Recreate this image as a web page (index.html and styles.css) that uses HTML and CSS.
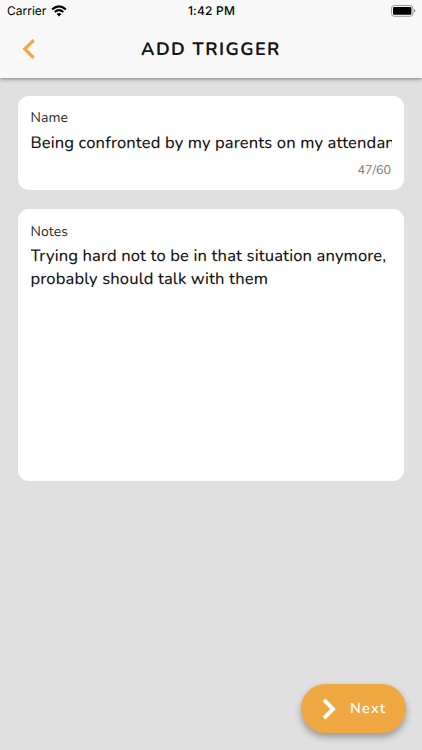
FILE: index.html
```html
<!DOCTYPE html>
<html lang="en">
<head>
    <meta charset="UTF-8">
    <meta name="viewport" content="width=device-width, initial-scale=1.0">
    <title>Add Trigger</title>
    <link rel="stylesheet" href="styles.css">
</head>
<body>
    <header class="top">
        <div class="status">
            <div class="carrier">
                <span>Carrier</span>
                <svg class="wifi" width="16" height="12" viewBox="0 0 16 12">
                    <path d="M1.2 4.4 Q8 -1.8 14.8 4.4" fill="none" stroke="#000" stroke-width="2.2"/>
                    <path d="M3.7 7 Q8 3.2 12.3 7" fill="none" stroke="#000" stroke-width="2"/>
                    <path d="M5.6 9 Q8 6.8 10.4 9 L8 11.5 Z"/>
                </svg>
            </div>
            <span class="time">1:42 PM</span>
            <svg class="battery" width="25" height="12" viewBox="0 0 25 12">
                <rect x="0.5" y="0.5" width="21.4" height="10.8" rx="2.8" fill="none" stroke="#999"/>
                <rect x="2" y="2" width="18.4" height="7.8" rx="1.2"/>
                <path d="M23 4 Q24.4 4.6 24.4 5.8 Q24.4 7 23 7.6 Z" fill="#888"/>
            </svg>
        </div>
        <div class="navbar">
            <button class="back" aria-label="Back">
                <svg width="14" height="22" viewBox="0 0 14 22">
                    <path d="M11.7 2.2 L2.7 11 L11.7 19.8" fill="none" stroke="#efa844" stroke-width="3.2"/>
                </svg>
            </button>
            <h1>ADD TRIGGER</h1>
        </div>
    </header>

    <main>
        <div class="card name-card">
            <label for="name">Name</label>
            <input type="text" id="name" maxlength="60" value="Being confronted by my parents on my attendance">
            <div class="counter">47/60</div>
        </div>
        <div class="card notes-card">
            <label for="notes">Notes</label>
            <textarea id="notes" spellcheck="false">Trying hard not to be in that situation anymore, probably should talk with them</textarea>
        </div>
    </main>

    <button class="next">
        <svg width="14" height="22" viewBox="0 0 14 22">
            <path d="M2 1.8 L11 11 L2 20.2" fill="none" stroke="#fff" stroke-width="4"/>
        </svg>
        <span>Next</span>
    </button>
</body>
</html>
```
FILE: styles.css
```css
* {
    box-sizing: border-box;
}
body {
    margin: 0;
    height: 750px;
    overflow: hidden;
    background-color: #e0e0e0;
    font-family: Nunito, Lato, sans-serif;
    text-rendering: geometricPrecision;
    color: #151515;
}
.top {
    height: 78px;
    background-color: #f8f8f8;
    box-shadow: 0 1px 4px rgba(0, 0, 0, 0.45);
}
.status {
    display: grid;
    grid-template-columns: 1fr auto 1fr;
    align-items: center;
    height: 21px;
    padding: 0 6px 0 7px;
    font-family: Inter, sans-serif;
    font-size: 12px;
    color: #000;
}
.carrier {
    display: flex;
    align-items: center;
    gap: 5px;
}
.time {
    font-weight: 500;
    letter-spacing: 0.2px;
}
.battery {
    justify-self: end;
}
.navbar {
    display: grid;
    grid-template-columns: 60px 1fr 60px;
    align-items: center;
    height: 56px;
}
.back {
    display: flex;
    padding: 0 0 0 22px;
    border: none;
    background: none;
}
h1 {
    margin: 0;
    padding-top: 1px;
    text-align: center;
    font-size: 18px;
    line-height: 24px;
    font-weight: 750;
    letter-spacing: 1.45px;
}
main {
    display: flex;
    flex-direction: column;
    gap: 19px;
    padding: 18px 18px 0;
}
.card {
    display: flex;
    flex-direction: column;
    padding: 13px 12px 0 12.5px;
    border-radius: 11px;
    background-color: #fff;
}
.name-card {
    height: 94px;
}
.notes-card {
    height: 272px;
    padding-top: 14px;
}
label {
    font-size: 14px;
    line-height: 18px;
    letter-spacing: 0.1px;
    color: #2c2c2c;
}
input,
textarea {
    width: 100%;
    padding: 0;
    border: none;
    outline: none;
    resize: none;
    overflow: hidden;
    background: none;
    font-family: inherit;
    font-size: 16.5px;
    font-weight: 500;
    line-height: 22.5px;
    letter-spacing: 0.12px;
    text-rendering: inherit;
    color: #151515;
}
input {
    height: 24px;
    margin-top: 3px;
}
textarea {
    height: 220px;
    margin-top: 4px;
}
.counter {
    margin-top: 8px;
    padding-right: 1px;
    text-align: right;
    font-size: 12.5px;
    line-height: 17px;
    color: #757575;
}
.next {
    position: absolute;
    right: 16px;
    bottom: 17px;
    display: flex;
    align-items: center;
    gap: 14px;
    width: 105px;
    height: 49px;
    padding: 0 0 0 21px;
    border: none;
    border-radius: 25px;
    background-color: #f0a843;
    box-shadow: 0 4px 7px rgba(0, 0, 0, 0.32);
    color: #fff;
    font-family: inherit;
    font-size: 14.5px;
    font-weight: 600;
    letter-spacing: 1.2px;
    text-rendering: inherit;
}
```
